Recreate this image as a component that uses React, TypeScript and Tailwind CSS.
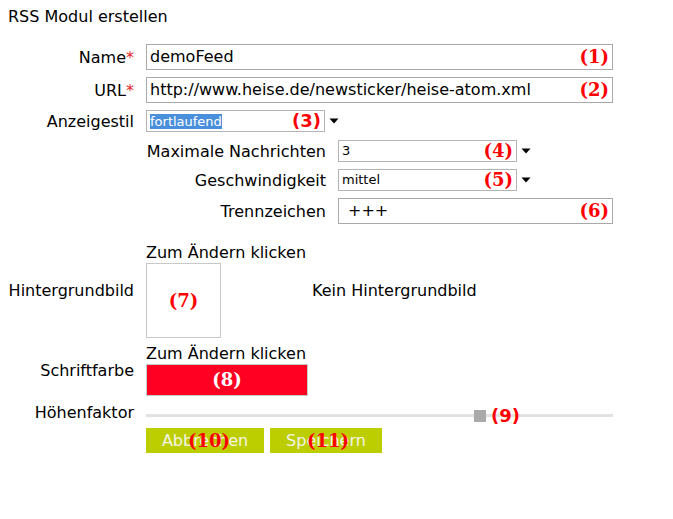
const sans = { fontFamily: '"DejaVu Sans", Verdana, sans-serif' };

function Mark({ n, serif = true, className = "" }: { n: string; serif?: boolean; className?: string }) {
  return (
    <span
      className={`text-[18px] font-bold leading-none text-[#ff0000] ${className}`}
      style={{ fontFamily: serif ? '"DejaVu Serif", serif' : '"DejaVu Sans", sans-serif' }}
    >
      ({n})
    </span>
  );
}

function Caret() {
  return (
    <svg width="10" height="6" viewBox="0 0 10 6" className="shrink-0">
      <path d="M0.5 0.5 L9.5 0.5 L5 5.5 Z" fill="#000" />
    </svg>
  );
}

function Label({ children, className = "" }: { children: React.ReactNode; className?: string }) {
  return <div className={`text-right leading-[19px] ${className}`}>{children}</div>;
}

export default function App() {
  return (
    <div className="min-h-screen bg-white text-[16px] text-black" style={sans}>
      <div className="ml-2 w-[605px] pt-[7px]">
        <h1 className="h-[19px] text-[16px] font-normal leading-[19px]">RSS Modul erstellen</h1>

        <div className="mt-[18px] grid grid-cols-[126px_1fr] items-center gap-x-3">
          <Label>
            Name<span className="text-[#e8232a]">*</span>
          </Label>
          <div className="flex h-[26px] items-center justify-between border border-[#a9a9a9] pl-[3px] pr-[3px]">
            <span>demoFeed</span>
            <Mark n="1" />
          </div>

          <Label className="mt-[7px]">
            URL<span className="text-[#e8232a]">*</span>
          </Label>
          <div className="mt-[7px] flex h-[26px] items-center justify-between border border-[#a9a9a9] pl-[3px] pr-[3px]">
            <span>http://www.heise.de/newsticker/heise-atom.xml</span>
            <Mark n="2" />
          </div>

          <Label className="mt-[7px]">Anzeigestil</Label>
          <div className="mt-[7px] flex items-center gap-[4px]">
            <div className="flex h-[22px] w-[179px] items-center justify-between border border-[#b4b4b4] pl-[3px] pr-[3px]">
              <span className="bg-[#4a8fdb] text-[13px] leading-[15px] text-white">fortlaufend</span>
              <Mark n="3" serif={false} className="text-[17px]" />
            </div>
            <Caret />
          </div>

          <div />
          <div className="grid grid-cols-[180px_1fr] items-center gap-x-3">
            <Label className="mt-[8px]">Maximale Nachrichten</Label>
            <div className="mt-[8px] flex items-center gap-[4px]">
              <div className="flex h-[22px] w-[179px] items-center justify-between border border-[#b4b4b4] pl-[3px] pr-[3px]">
                <span className="text-[13px]">3</span>
                <Mark n="4" />
              </div>
              <Caret />
            </div>

            <Label className="mt-[7px]">Geschwindigkeit</Label>
            <div className="mt-[7px] flex items-center gap-[4px]">
              <div className="flex h-[22px] w-[179px] items-center justify-between border border-[#b4b4b4] pl-[3px] pr-[3px]">
                <span className="text-[13px]">mittel</span>
                <Mark n="5" />
              </div>
              <Caret />
            </div>

            <Label className="mt-[7px]">Trennzeichen</Label>
            <div className="mt-[7px] flex h-[26px] items-center justify-between border border-[#a9a9a9] pl-[9px] pr-[3px]">
              <span>+++</span>
              <Mark n="6" />
            </div>
          </div>

          <Label className="mt-[19px]">Hintergrundbild</Label>
          <div className="mt-[19px] flex items-center">
            <div className="flex flex-col">
              <div className="h-[20px] leading-[20px]">Zum Ändern klicken</div>
              <div className="flex h-[75px] w-[75px] items-center justify-center border border-[#c8c8c8]">
                <Mark n="7" />
              </div>
            </div>
            <div className="ml-[6px]">Kein Hintergrundbild</div>
          </div>

          <Label className="mt-[6px]">Schriftfarbe</Label>
          <div className="mt-[6px] flex flex-col">
            <div className="h-[20px] leading-[20px]">Zum Ändern klicken</div>
            <div className="flex h-[32px] w-[162px] items-center justify-center border border-[#c8c8c8] bg-[#ff0022]">
              <Mark n="8" className="text-white" />
            </div>
          </div>

          <Label className="mt-[7px] h-[20px] leading-[20px]">Höhenfaktor</Label>
          <div className="relative mt-[7px] h-[20px]">
            <div className="mt-[11px] h-[3px] bg-[#e2e2e2]" />
            <div className="absolute left-[328px] top-[7px] h-[12px] w-[12px] bg-[#aaaaaa]" />
            <Mark n="9" serif={false} className="absolute left-[345px] top-[4px] text-[17px]" />
          </div>

          <div />
          <div className="mt-[5px] flex gap-[6px]">
            <button className="relative flex h-[25px] w-[118px] items-center justify-center bg-[#bccd00] text-[16px] text-[#f4f4e8]">
              Abbrechen
              <Mark n="10" className="absolute left-[42px] top-[4px]" />
            </button>
            <button className="relative flex h-[25px] w-[112px] items-center justify-center bg-[#bccd00] text-[16px] text-[#f4f4e8]">
              Speichern
              <Mark n="11" className="absolute left-[37px] top-[4px]" />
            </button>
          </div>
        </div>
      </div>
    </div>
  );
}
